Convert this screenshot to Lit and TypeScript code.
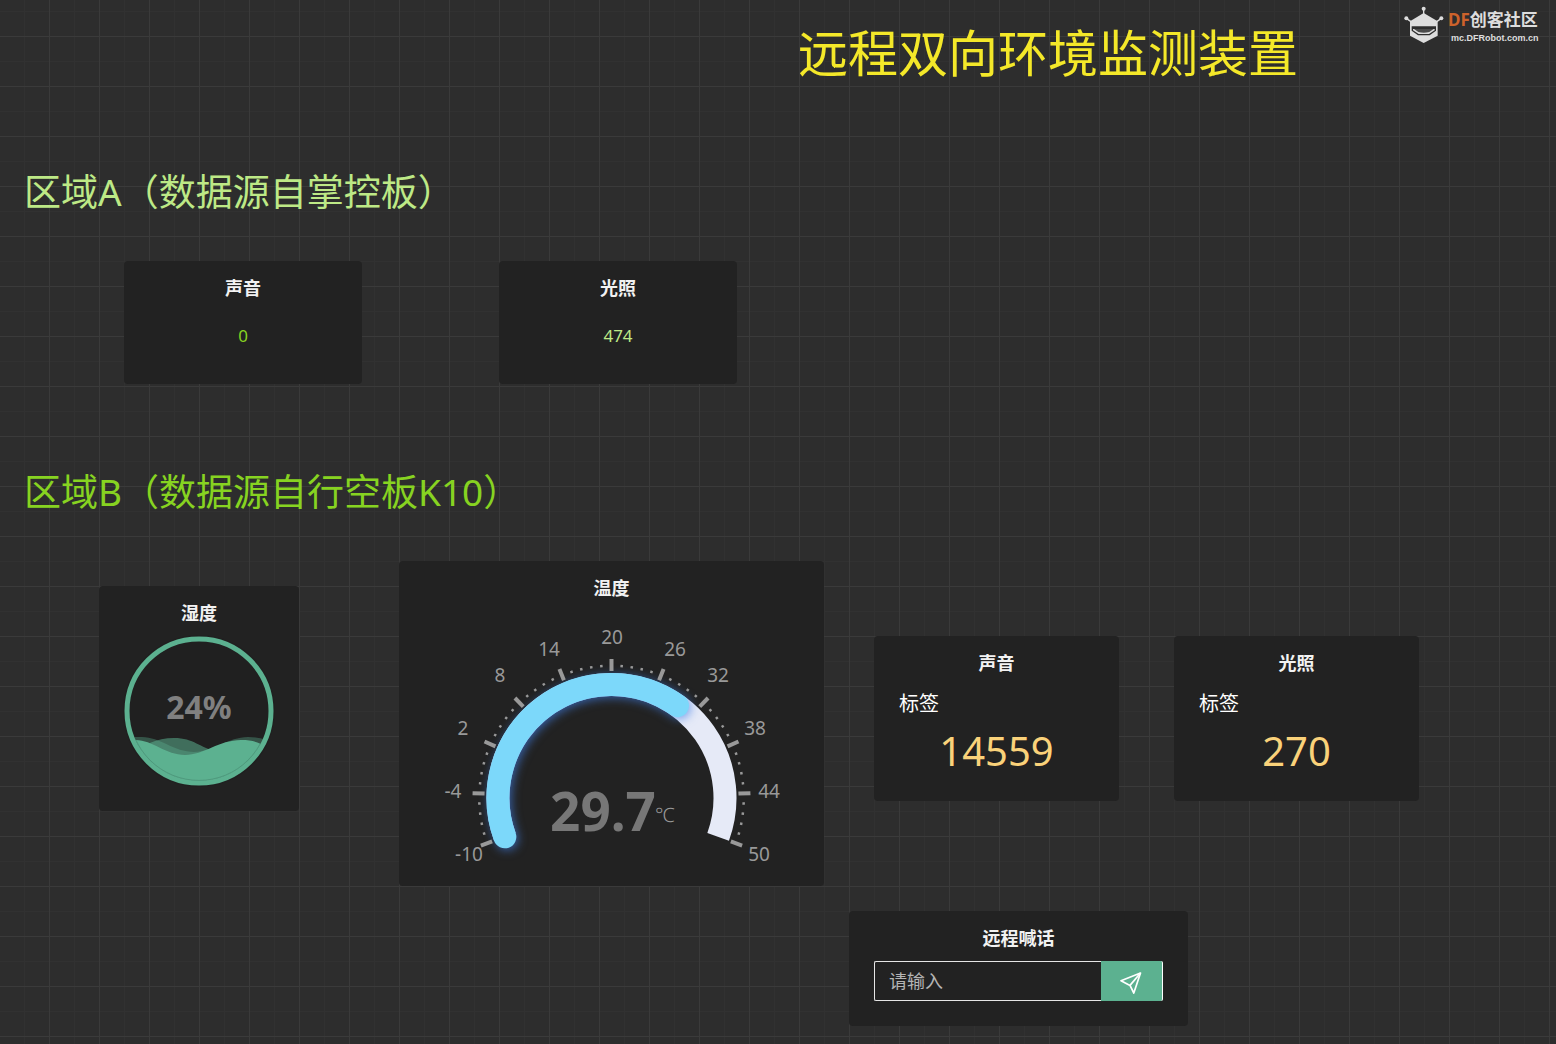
import { LitElement, css, html, svg } from "lit";
import { customElement, property } from "lit/decorators.js";

const FONT = css`"Noto Sans", "Noto Sans CJK SC", sans-serif`;

@customElement("dash-card")
class DashCard extends LitElement {
  @property() heading = "";

  static styles = css`
    :host {
      display: block;
      box-sizing: border-box;
      padding: 14px 25px 25px;
      border-radius: 4px;
      background: #222222;
    }
    .heading {
      margin: 0;
      font-size: 18px;
      line-height: 26px;
      font-weight: 700;
      text-align: center;
      color: #f2f2f2;
    }
  `;

  render() {
    return html`<h3 class="heading">${this.heading}</h3>
      <slot></slot>`;
  }
}

@customElement("liquid-meter")
class LiquidMeter extends LitElement {
  @property({ type: Number }) value = 0;

  static styles = css`
    :host {
      display: block;
    }
    .meter {
      display: block;
      width: 100%;
      overflow: visible;
    }
    .value {
      font: 700 32px ${FONT};
      fill: #808080;
      text-anchor: middle;
    }
  `;

  render() {
    return html`<svg class="meter" viewBox="0 0 150 150" role="img" aria-label="${this.value}%">
      <defs>
        <clipPath id="bowl"><circle cx="75" cy="75" r="70" /></clipPath>
        <clipPath id="level">
          <path d="M0 104H12C28 104 42 119 61 119S95 104 117 104C126 104 130 105 137 108H150V150H0Z" />
        </clipPath>
      </defs>
      <circle cx="75" cy="75" r="76" fill="#202020" />
      <g clip-path="url(#bowl)" fill="#5cb190">
        <path
          opacity="0.36"
          d="M0 103C6 101 12 101 18 101C36 101 50 116 70 116S104 101 124 101C131 101 136 102 150 106V150H0Z"
        />
        <path
          opacity="0.54"
          d="M0 117C18 112 30 102 50 102S76 112 92 115C110 118 130 112 150 106V150H0Z"
        />
        <path d="M0 104H12C28 104 42 119 61 119S95 104 117 104C126 104 130 105 137 108H150V150H0Z" />
      </g>
      <circle cx="75" cy="75" r="72" fill="none" stroke="#5cb190" stroke-width="5" />
      <circle
        cx="75"
        cy="75"
        r="69.4"
        fill="none"
        stroke="#468a70"
        stroke-width="0.6"
        clip-path="url(#level)"
      />
      <text class="value" x="75" y="83">${this.value}%</text>
    </svg>`;
  }
}

const CX = 212.5;
const CY = 198;
const START = 200;
const SWEEP = 220;

const polar = (radius: number, degrees: number) => {
  const a = (degrees * Math.PI) / 180;
  return [CX + radius * Math.cos(a), CY - radius * Math.sin(a)];
};

const arc = (radius: number, from: number, to: number) => {
  const [x1, y1] = polar(radius, from);
  const [x2, y2] = polar(radius, to);
  return `M${x1} ${y1}A${radius} ${radius} 0 ${from - to > 180 ? 1 : 0} 1 ${x2} ${y2}`;
};

const SCALE = [
  { text: "-10", x: 70, y: 254 },
  { text: "-4", x: 54, y: 191 },
  { text: "2", x: 64, y: 128 },
  { text: "8", x: 101, y: 75 },
  { text: "14", x: 150, y: 49 },
  { text: "20", x: 213, y: 37 },
  { text: "26", x: 276, y: 49 },
  { text: "32", x: 319, y: 75 },
  { text: "38", x: 356, y: 128 },
  { text: "44", x: 370, y: 191 },
  { text: "50", x: 360, y: 254 },
];

@customElement("temp-gauge")
class TempGauge extends LitElement {
  @property({ type: Number }) value = 0;
  @property({ type: Number }) min = -10;
  @property({ type: Number }) max = 50;

  static styles = css`
    :host {
      display: block;
    }
    .gauge {
      display: block;
      width: 100%;
      overflow: visible;
    }
    .progress {
      filter: drop-shadow(2px 2px 5px rgba(64, 128, 232, 0.65));
    }
    .label {
      font: 400 19px ${FONT};
      fill: #999999;
      text-anchor: middle;
    }
    .value {
      font: 700 53px ${FONT};
      fill: #777777;
      text-anchor: middle;
    }
    .unit {
      font: 300 20px ${FONT};
      fill: #999999;
      text-anchor: middle;
    }
  `;

  render() {
    const end = START - ((this.value - this.min) / (this.max - this.min)) * SWEEP;
    const marks = Array.from({ length: 51 }, (_, i) => {
      const major = i % 5 === 0;
      const angle = START - (i * SWEEP) / 50;
      const [x1, y1] = polar(major ? 127 : 131, angle);
      const [x2, y2] = polar(major ? 139 : 133.5, angle);
      return svg`<line x1=${x1} y1=${y1} x2=${x2} y2=${y2} stroke="#999999" stroke-width=${major ? 4 : 2.5} />`;
    });
    return html`<svg class="gauge" viewBox="0 1 425 261" role="img" aria-label="${this.value}℃">
      <path d=${arc(113.5, START, START - SWEEP)} fill="none" stroke="#e6eaf7" stroke-width="23" />
      <g class="progress">
        <path
          d=${arc(113.5, START, end)}
          fill="none"
          stroke="#7cd8fa"
          stroke-width="23"
          stroke-linecap="round"
        />
      </g>
      ${marks}
      ${SCALE.map((s) => svg`<text class="label" x=${s.x} y=${s.y + 7}>${s.text}</text>`)}
      <text class="value" x="204" y="231">${this.value}</text>
      <text class="unit" x="266" y="222">℃</text>
    </svg>`;
  }
}

@customElement("site-logo")
class SiteLogo extends LitElement {
  static styles = css`
    :host {
      display: flex;
      align-items: flex-start;
      gap: 4px;
      color: #dddddd;
    }
    .robot {
      flex: none;
      width: 40px;
      height: 38px;
    }
    .words {
      display: flex;
      flex-direction: column;
      padding-top: 3px;
      white-space: nowrap;
    }
    .name {
      font-size: 17px;
      line-height: 21px;
      font-weight: 700;
    }
    .accent {
      color: #cd622b;
    }
    .site {
      padding-left: 3px;
      font-family: "Liberation Sans", sans-serif;
      font-size: 9px;
      line-height: 16px;
      font-weight: 700;
    }
  `;

  render() {
    return html`<svg class="robot" viewBox="22 18 120 114" aria-hidden="true">
        <g fill="#dddddd" stroke="none">
          <circle cx="81" cy="26" r="6" />
          <circle cx="29" cy="55" r="6" />
          <circle cx="134" cy="55" r="6" />
          <path d="M81 39L123 64V107L81 129L40 107V64Z" />
        </g>
        <path d="M81 26V44M29 55L46 67M134 55L117 67" stroke="#dddddd" stroke-width="4" fill="none" />
        <path d="M45 79H118V92L99 106H64L45 92Z" fill="#2d2d2d" />
        <path d="M49 87H114V91L97 102H66L49 91Z" fill="#dddddd" />
        <path d="M52 87H111L98 96Q81 100 65 96Z" fill="#4a4a4a" />
      </svg>
      <div class="words">
        <span class="name"><span class="accent">DF</span>创客社区</span>
        <span class="site">mc.DFRobot.com.cn</span>
      </div>`;
  }
}

@customElement("app-root")
class AppRoot extends LitElement {
  static styles = css`
    :host {
      display: block;
      box-sizing: border-box;
      min-height: 100vh;
      padding-bottom: 18px;
      font-family: ${FONT};
      color: #ffffff;
      background-color: #2d2d2d;
      background-image: linear-gradient(to right, #3a3a3a 1px, transparent 1px),
        linear-gradient(to bottom, #3a3a3a 1px, transparent 1px),
        linear-gradient(to right, #313131 1px, transparent 1px),
        linear-gradient(to bottom, #313131 1px, transparent 1px);
      background-size: 50px 50px;
      background-position: 49px 0, 0 36px, 24px 0, 0 11px;
    }
    .header {
      display: grid;
      grid-template-columns: 798fr 606fr 152fr;
      align-items: start;
      padding-bottom: 62px;
    }
    .title {
      grid-column: 2;
      margin: 0;
      padding-top: 16px;
      font-size: 50px;
      line-height: 74px;
      font-weight: 400;
      white-space: nowrap;
      color: #f4e829;
    }
    .logo {
      padding-top: 6px;
    }
    .zone {
      margin: 0;
      padding-left: 24px;
      font-size: 37px;
      line-height: 80px;
      font-weight: 400;
    }
    .zone-a {
      color: #bde986;
    }
    .zone-b {
      color: #87d321;
    }
    .row-a {
      display: grid;
      grid-template-columns: 238fr 238fr 682fr;
      gap: 137px;
      padding: 29px 0 68px 124px;
    }
    .reading {
      margin: 0;
      padding: 22px 0 11px;
      font-size: 17px;
      line-height: 25px;
      text-align: center;
    }
    .green {
      color: #87d321;
    }
    .pale {
      color: #bde986;
    }
    .row-b {
      display: grid;
      grid-template-columns: minmax(0, 200fr) minmax(0, 1020fr);
      align-items: start;
      gap: 100px;
      padding: 29px 137px 0 99px;
    }
    .humidity {
      margin-top: 25px;
    }
    .liquid {
      padding-top: 10px;
    }
    .main {
      display: grid;
      grid-template-columns: minmax(0, 425fr) minmax(0, 570fr);
      align-items: start;
      gap: 25px;
    }
    .temperature {
      padding: 14px 0 24px;
    }
    .side {
      padding-top: 75px;
    }
    .stats {
      display: grid;
      grid-template-columns: 1fr 1fr;
      gap: 55px;
      padding-left: 25px;
    }
    .tag {
      margin: 0;
      padding-top: 13px;
      font-size: 20px;
      line-height: 30px;
    }
    .number {
      margin: 0;
      padding-top: 7px;
      font-size: 40px;
      line-height: 50px;
      text-align: center;
      color: #fad27a;
    }
    .talk {
      max-width: 339px;
      margin-top: 110px;
    }
    .form {
      display: flex;
      padding-top: 10px;
    }
    .input {
      flex: 1;
      min-width: 0;
      height: 40px;
      box-sizing: border-box;
      padding: 0 14px;
      border: 1px solid #e6e6e6;
      border-right: 0;
      border-radius: 2px 0 0 2px;
      outline: none;
      background: transparent;
      color: #ffffff;
      font: 400 18px ${FONT};
    }
    .input::placeholder {
      color: #b4b4b4;
      opacity: 1;
    }
    .send {
      flex: none;
      display: flex;
      align-items: center;
      justify-content: center;
      width: 62px;
      height: 40px;
      padding: 4px 2px 0 0;
      border: 0;
      border-right: 1px solid #ffffff;
      border-radius: 0 2px 2px 0;
      background: #5cb190;
    }
    .plane {
      width: 22px;
      height: 22px;
    }
  `;

  render() {
    return html`
      <header class="header">
        <h1 class="title">远程双向环境监测装置</h1>
        <site-logo class="logo"></site-logo>
      </header>

      <h2 class="zone zone-a">区域A（数据源自掌控板）</h2>
      <section class="row-a">
        <dash-card heading="声音"><p class="reading green">0</p></dash-card>
        <dash-card heading="光照"><p class="reading pale">474</p></dash-card>
      </section>

      <h2 class="zone zone-b">区域B（数据源自行空板K10）</h2>
      <section class="row-b">
        <dash-card class="humidity" heading="湿度">
          <liquid-meter class="liquid" value="24"></liquid-meter>
        </dash-card>
        <div class="main">
          <dash-card class="temperature" heading="温度">
            <temp-gauge value="29.7"></temp-gauge>
          </dash-card>
          <div class="side">
            <div class="stats">
              <dash-card heading="声音">
                <p class="tag">标签</p>
                <p class="number">14559</p>
              </dash-card>
              <dash-card heading="光照">
                <p class="tag">标签</p>
                <p class="number">270</p>
              </dash-card>
            </div>
            <dash-card class="talk" heading="远程喊话">
              <form class="form" @submit=${(e: Event) => e.preventDefault()}>
                <input class="input" type="text" placeholder="请输入" aria-label="远程喊话" />
                <button class="send" type="submit" aria-label="发送">
                  <svg class="plane" viewBox="0 0 22 22" fill="none" stroke="#ffffff" stroke-width="1.7" stroke-linejoin="round">
                    <path d="M20.5 1L1 8.8L10 13.4L13.8 21Z" />
                    <path d="M20.5 1L10 13.4" />
                  </svg>
                </button>
              </form>
            </dash-card>
          </div>
        </div>
      </section>
    `;
  }
}
